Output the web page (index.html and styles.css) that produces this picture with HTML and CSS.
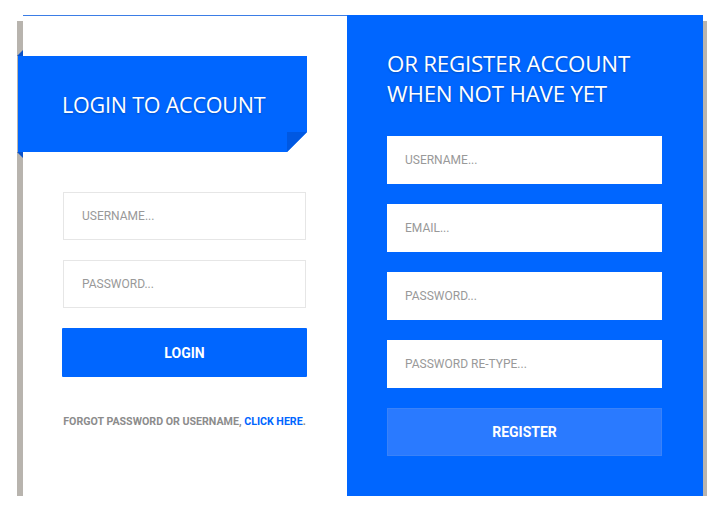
FILE: index.html
```html
<!DOCTYPE html>
<html lang="en">
<head>
<meta charset="utf-8">
<title>Login / Register</title>
<link rel="stylesheet" href="styles.css">
</head>
<body>
<div class="card">
  <section class="panel panel-login">
    <div class="ribbon">
      <h2 class="ribbon-title">LOGIN TO ACCOUNT</h2>
    </div>
    <form class="form form-login">
      <div class="field">USERNAME...</div>
      <div class="field">PASSWORD...</div>
      <button type="button" class="btn btn-login">LOGIN</button>
    </form>
    <p class="forgot">FORGOT PASSWORD OR USERNAME, <a class="forgot-link" href="#">CLICK HERE</a>.</p>
  </section>
  <section class="panel panel-register">
    <h2 class="register-title">OR REGISTER ACCOUNT<br>WHEN NOT HAVE YET</h2>
    <form class="form form-register">
      <div class="field field-plain">USERNAME...</div>
      <div class="field field-plain">EMAIL...</div>
      <div class="field field-plain">PASSWORD...</div>
      <div class="field field-plain">PASSWORD RE-TYPE...</div>
      <button type="button" class="btn btn-register">REGISTER</button>
    </form>
  </section>
</div>
</body>
</html>
```

FILE: styles.css
```css
* { box-sizing: border-box; }
html, body {
  margin: 0;
  padding: 0;
  background: #ffffff;
}
body {
  font-family: Roboto, "Liberation Sans", sans-serif;
  padding: 15px 0 0 23px;
}
.card {
  position: relative;
  z-index: 0;
  display: flex;
  width: 680px;
  height: 481px;
}
.card::before {
  content: "";
  position: absolute;
  left: -6px;
  right: -4px;
  top: 6px;
  bottom: -4px;
  background: #b8b4ae;
  z-index: -1;
}
.panel {
  display: flex;
  flex-direction: column;
}
.panel-login {
  position: relative;
  width: 324px;
  background: #ffffff;
  border-top: 1px solid #3b7de6;
  padding: 40px 41px 0 40px;
}
.panel-login::before,
.panel-login::after {
  content: "";
  position: absolute;
  left: -6px;
  width: 6px;
  height: 6px;
  background: #0a52c8;
}
.panel-login::before {
  top: 34px;
  clip-path: polygon(100% 0, 100% 100%, 0 100%);
}
.panel-login::after {
  top: 136px;
  clip-path: polygon(0 0, 100% 0, 100% 100%);
}
.panel-register {
  width: 356px;
  background: #0066ff;
  padding: 34px 41px 0 40px;
}
.ribbon {
  position: relative;
  height: 96px;
  margin: 0 -1px 0 -45px;
  background: #0066ff;
  display: flex;
  align-items: center;
  padding-left: 44px;
  clip-path: polygon(0 0, 100% 0, 100% 76px, 269px 100%, 0 100%);
}
.ribbon::after {
  content: "";
  position: absolute;
  right: 0;
  bottom: 0;
  width: 20px;
  height: 20px;
  background: linear-gradient(135deg, #0058e2 50%, transparent 50%);
}
.ribbon-title,
.register-title {
  margin: 0;
  color: #ffffff;
  font-family: "Open Sans", sans-serif;
  font-weight: 500;
  letter-spacing: -0.2px;
  text-shadow: 0 1px 2px rgba(0, 0, 0, 0.25);
}
.ribbon-title {
  font-size: 21.5px;
}
.register-title {
  font-size: 22.3px;
  line-height: 30px;
}
.form {
  display: flex;
  flex-direction: column;
  gap: 20px;
}
.form-login {
  margin-top: 40px;
}
.form-register {
  margin-top: 27px;
}
.field {
  height: 48px;
  border: 1px solid #e6e6e6;
  background: #ffffff;
  color: #999999;
  font-size: 12px;
  display: flex;
  align-items: center;
  padding-left: 18px;
}
.field-plain {
  border: none;
  padding-left: 18px;
}
.btn {
  height: 49px;
  border: none;
  color: #ffffff;
  font-family: Roboto, sans-serif;
  font-weight: 700;
  font-size: 14px;
  padding: 0;
  cursor: pointer;
}
.btn-login {
  background: #0066ff;
  margin: 0 -1px;
  border-radius: 1px;
}
.btn-register {
  height: 48px;
  background: #2a7aff;
  border: 1px solid #3a82f8;
}
.forgot {
  margin: 38px -10px 0;
  font-size: 10.65px;
  font-weight: 700;
  color: #8c8c8c;
  text-align: center;
  white-space: nowrap;
}
.forgot-link {
  color: #0066ff;
  text-decoration: none;
}
```
